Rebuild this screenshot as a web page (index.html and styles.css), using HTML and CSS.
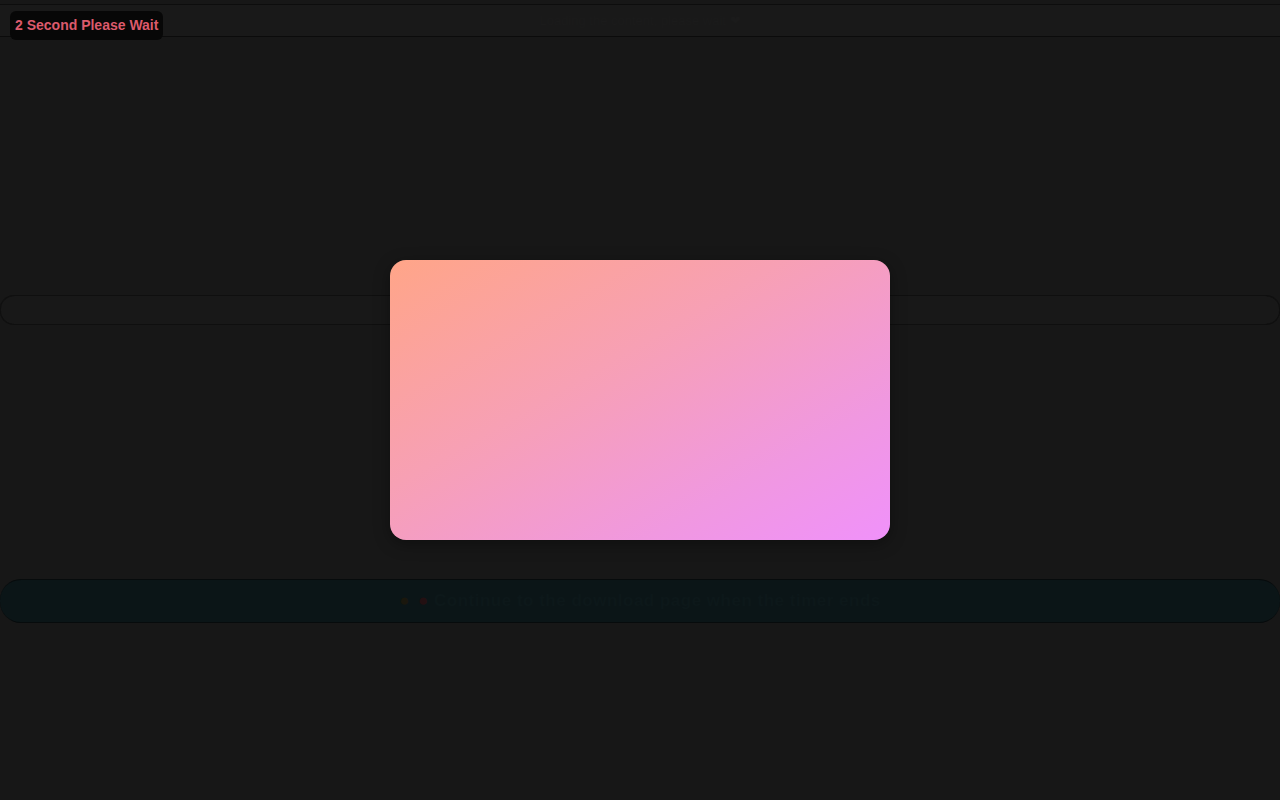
FILE: index.html
```html
<!DOCTYPE html>
<html lang="en">
<head>
<meta charset="utf-8">
<title>Please Wait</title>
<link rel="stylesheet" href="styles.css">
</head>
<body>
  <div class="page">
    <header class="topbar">
      <span class="topbar-text">Loading the content, please wait ❤</span>
    </header>
    <div class="spacer-top"></div>
    <div class="pill-mid"></div>
    <div class="spacer-mid"></div>
    <div class="pill-bottom">
      <span class="bottom-text"><span class="dot-a">●</span><span class="dot-b">●</span> Continue to the download page when the timer ends</span>
    </div>
  </div>

  <div class="wait-badge">2 Second Please Wait</div>

  <div class="overlay">
    <div class="modal"></div>
  </div>
</body>
</html>
```

FILE: styles.css
```css
html, body {
  margin: 0;
  padding: 0;
  background: #171717;
  font-family: "Liberation Sans", Arial, sans-serif;
  height: 100%;
  overflow: hidden;
}

.page {
  display: flex;
  flex-direction: column;
  padding-top: 4px;
}

.topbar {
  height: 31px;
  border-top: 1px solid #0d0d0d;
  border-bottom: 1px solid #0b0b0b;
  background: #191919;
  display: flex;
  align-items: center;
  justify-content: center;
}

.topbar-text {
  color: #1b1b1b;
  font-size: 13px;
}

.spacer-top {
  height: 258px;
}

.pill-mid {
  height: 28px;
  border-top: 1px solid #0f0f0f;
  border-bottom: 1px solid #0f0f0f;
  border-radius: 14px;
  background: #181818;
  box-shadow: inset 1px 0 0 #101010, inset -1px 0 0 #101010;
}

.spacer-mid {
  height: 254px;
}

.pill-bottom {
  height: 42px;
  border-top: 1px solid #070b0c;
  border-bottom: 1px solid #070b0c;
  border-radius: 21px;
  background: #0b1517;
  display: flex;
  align-items: center;
  justify-content: center;
}

.bottom-text {
  color: #0d181a;
  font-size: 17px;
  font-weight: bold;
  letter-spacing: 0.5px;
}

.dot-a {
  color: #1a170d;
  margin-right: 8px;
}

.dot-b {
  color: #231012;
}

.wait-badge {
  position: fixed;
  top: 11px;
  left: 10px;
  padding: 6px 5px 7px 5px;
  background: #070707;
  border-radius: 6px;
  color: #dc5a6c;
  font-weight: bold;
  font-size: 14px;
  line-height: 16px;
}

.overlay {
  position: fixed;
  inset: 0;
  display: flex;
  align-items: center;
  justify-content: center;
}

.modal {
  width: 500px;
  height: 280px;
  border-radius: 16px;
  background: linear-gradient(150deg, #ffa588 0%, #f7a0b4 40%, #f098e0 75%, #f091fa 100%);
  box-shadow: 0 4px 16px rgba(0, 0, 0, 0.35);
}
```
